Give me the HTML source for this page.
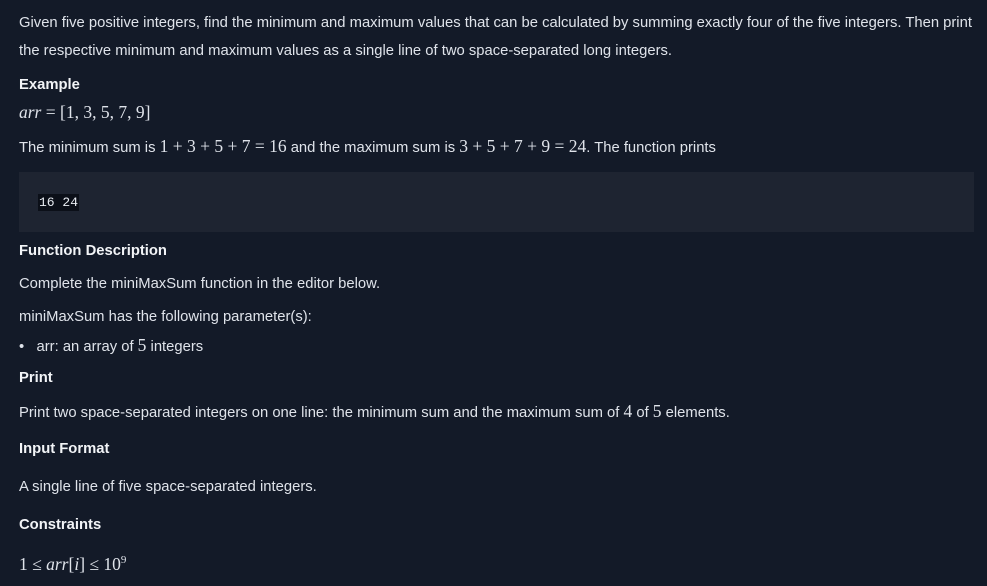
<!DOCTYPE html>
<html><head><meta charset="utf-8"><style>
html,body{margin:0;padding:0;background:#131a28;width:987px;height:586px;overflow:hidden}
body{font-family:"Liberation Sans",sans-serif;color:#dfe3ea;font-size:14.8px;position:relative}
.l{position:absolute;left:19px;white-space:nowrap;line-height:20px}
.b{font-weight:bold;color:#f2f4f7}
.m{font-family:"Liberation Serif",serif;font-size:17.5px}
.i{font-style:italic}
.code{position:absolute;left:19px;top:172px;width:955px;height:60px;background:#1e2431}
.code span{position:absolute;left:19px;top:22px;font-family:"Liberation Mono",monospace;font-size:13px;background:#0b0f18;color:#e8ecf2;padding:0 1px;line-height:17px}
</style></head><body>
<div class="l" style="top:13px">Given five positive integers, find the minimum and maximum values that can be calculated by summing exactly four of the five integers. Then print</div>
<div class="l" style="top:41px">the respective minimum and maximum values as a single line of two space-separated long integers.</div>
<div class="l b" style="top:75px">Example</div>
<div class="l m" style="top:102px"><span class="i">arr</span> = [1, 3, 5, 7, 9]</div>
<div class="l" style="top:136px">The minimum sum is <span class="m">1 + 3 + 5 + 7 = 16</span> and the maximum sum is <span class="m">3 + 5 + 7 + 9 = 24</span>. The function prints</div>
<div class="code"><span>16 24</span></div>
<div class="l b" style="top:241px">Function Description</div>
<div class="l" style="top:274px">Complete the miniMaxSum function in the editor below.</div>
<div class="l" style="top:307px">miniMaxSum has the following parameter(s):</div>
<div class="l" style="top:335px">&#8226;&nbsp;&nbsp; arr: an array of <span class="m">5</span> integers</div>
<div class="l b" style="top:368px">Print</div>
<div class="l" style="top:401px">Print two space-separated integers on one line: the minimum sum and the maximum sum of <span class="m">4</span> of <span class="m">5</span> elements.</div>
<div class="l b" style="top:439px">Input Format</div>
<div class="l" style="top:477px">A single line of five space-separated integers.</div>
<div class="l b" style="top:515px">Constraints</div>
<div class="l m" style="top:550px">1 &le; <span class="i">arr</span>[<span class="i">i</span>] &le; 10<sup style="font-size:11px">9</sup></div>
</body></html>
